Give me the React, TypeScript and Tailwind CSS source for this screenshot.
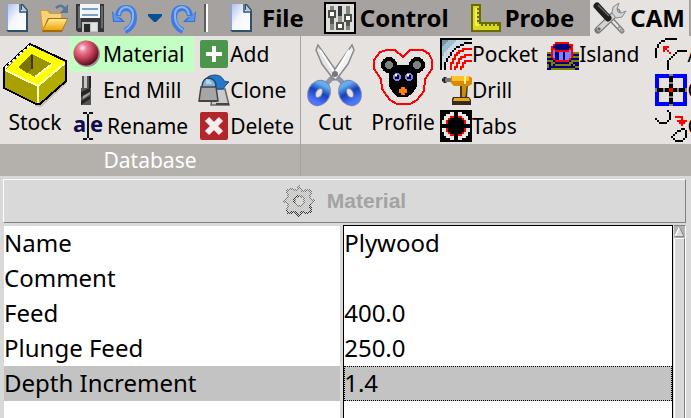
import type { ReactNode } from 'react';

const palette: Record<string, string> = {
  k: '#000000',
  r: '#ff0000',
  b: '#0000ff',
  n: '#000080',
  v: '#8080ff',
  o: '#808000',
  g: '#808080',
  w: '#e9e6e3',
  y: '#d8d820',
  Y: '#f0f060',
  d: '#6b6b00',
  1: '#6f94ab',
  2: '#9dbccc',
  3: '#c9dce6',
};

function PixelIcon({ rows, className = 'size-8' }: { rows: string[]; className?: string }) {
  return (
    <svg viewBox="0 0 16 16" className={`${className} shrink-0`} shapeRendering="crispEdges" aria-hidden="true">
      {rows.flatMap((row, y) =>
        row.split('').map((c, x) =>
          palette[c] ? <rect key={`${x}-${y}`} x={x} y={y} width="1" height="1" fill={palette[c]} /> : null,
        ),
      )}
    </svg>
  );
}

function Icon({ children, box = '0 0 32 32', className = 'size-8' }: { children: ReactNode; box?: string; className?: string }) {
  return (
    <svg viewBox={box} className={`${className} shrink-0 overflow-visible`} aria-hidden="true">
      {children}
    </svg>
  );
}

const pocket = [
  'kkkkkkkkkkkkkkkk',
  'k1112222333333ww',
  'k11222233333kkkk',
  'k122223333kk....',
  'k2222333kk......',
  'k222333k...rrrrr',
  'k22333k..rrr....',
  'k2333k..rr......',
  'k2333k.rr...rrrr',
  'k333k..r..rrr...',
  'k33k..rr.rr.....',
  'k33k..r..r..rrrr',
  'k3k..rr.rr.rr...',
  'k3k..r..r..r....',
  'k3k..r.rr.rr....',
  'kwk..r.r..r.....',
];

const tabs = [
  'kkkkkkkkkkkkkkkk',
  'kkkkkwwkkwwkkkkk',
  'kkkwwwwkkwwwwkkk',
  'kkwwwrrkkrrwwwkk',
  'kkwwrkkkkkkrwwkk',
  'kwwrkkkkkkkkrwwk',
  'kwwrkkkkkkkkrwwk',
  'kkkkkkkkkkkkkkkk',
  'kkkkkkkkkkkkkkkk',
  'kwwrkkkkkkkkrwwk',
  'kwwrkkkkkkkkrwwk',
  'kkwwrkkkkkkrwwkk',
  'kkwwwrrkkrrwwwkk',
  'kkkwwwwkkwwwwkkk',
  'kkkkkwwkkwwkkkkk',
  'kkkkkkkkkkkkkkkk',
];

const island = [
  '................',
  '................',
  '....rrrrrrr.....',
  '...rnnnnnnnrr...',
  '..rnnnnnnnnnr...',
  '..rrnnnnnnnrr...',
  '..rvrrrrrrrvr...',
  'oorvnnvvnvvvrooo',
  'nnrvnnvvnvvvrnnn',
  'oorvnnvvnvvvrooo',
  'nnnrnnvvnvvrnnnn',
  'ooonrrrrrrrnoooo',
  'nnoonnnnnnnoonnn',
  'ononoooooooononn',
  'onnnnnnnnnnnnnoo',
  'nnoooooooooooonn',
];

const arcFit = [
  '.....kkkkkk.....',
  '...kk...........',
  '..k.............',
  '.k..............',
  '.k..rrr.........',
  'k...rr..........',
  'k...r.r....kkkkk',
  'k......r..k.....',
  'k........k......',
  'k.......k.......',
  '.......k........',
  '......k.........',
  '......k.........',
  '......k.........',
  '......k.........',
  '......k.........',
];

const center = [
  'bbbbbbbggbbbbbbb',
  'bbbbbbbkkbbbbbbb',
  'bb.....kk.....bb',
  'bb.....kk.....bb',
  'bb.....gg.....bb',
  'bb.....kk.....bb',
  'bb.....kk.....bb',
  'gkkkgkkrrkkgkkkg',
  'gkkkgkkrrkkgkkkg',
  'bb.....kk.....bb',
  'bb.....kk.....bb',
  'bb.....gg.....bb',
  'bb.....kk.....bb',
  'bb.....kk.....bb',
  'bbbbbbbkkbbbbbbb',
  'bbbbbbbggbbbbbbb',
];

const closePath = [
  '......k.........',
  '.......k........',
  '.......k........',
  '.......k..rrrr..',
  'k......k.....r..',
  '.k....k....rrrrr',
  '..kkkk......rrr.',
  '.............r..',
  '................',
  '.............kk.',
  '...........kk..k',
  '..........k....k',
  '.........k.....k',
  '........k......k',
  '.........k....k.',
  '..........kkkk..',
];

const ruler = [
  '................',
  '.ddddd..........',
  '.dyyyd..........',
  '.dyYdd..........',
  '.dyYyd..........',
  '.dyYdd..........',
  '.dyYyd..........',
  '.dyYdd..........',
  '.dyYyd..........',
  '.dyYdd..........',
  '.dyYyddddddddddd',
  '.dyYYydydydydydd',
  '.dyyyyyyyyyyyyyd',
  '.dyyyyyyyyyyyyyd',
  '.ddddddddddddddd',
  '................',
];

const DocIcon = () => (
  <Icon>
    <defs>
      <linearGradient id="paper" x1="0" x2="1" y1="0" y2="1">
        <stop offset="0" stopColor="#a9bbe6" />
        <stop offset=".5" stopColor="#f4f7ff" />
        <stop offset="1" stopColor="#ffffff" />
      </linearGradient>
    </defs>
    <path d="M4 2h17l5 6v22H6l-2-2z" fill="#2f4f70" />
    <path d="M4 2h15v6h5v20H4z" fill="url(#paper)" />
    <path d="M4 2h2v26H4z" fill="#8fa5cf" />
    <path d="M20 3l5 6h-5z" fill="#b9cbe0" />
    <path d="M18 2v8h7" fill="none" stroke="#35516e" strokeWidth="1.5" />
  </Icon>
);

const OpenIcon = () => (
  <Icon>
    <defs>
      <linearGradient id="folder" x1="0" x2="0" y1="0" y2="1">
        <stop offset="0" stopColor="#ffe98a" />
        <stop offset="1" stopColor="#eda414" />
      </linearGradient>
    </defs>
    <path d="M2 8h8l3 3h11v4L9 28H4z" fill="#d39b2c" />
    <path d="M3 9h6l3 3h11v4H10L5 26z" fill="#f6d37a" />
    <path d="M10 16h20l-6 14H4z" fill="#a8690d" />
    <path d="M11 17h18l-5 11H5z" fill="url(#folder)" />
    <path d="M18 6q5-5 9 1" fill="none" stroke="#5b7796" strokeWidth="2.5" />
    <path d="M30 2v9h-8z" fill="#5b7796" />
  </Icon>
);

const SaveIcon = () => (
  <Icon>
    <path d="M2 2h28v28H4l-2-2z" fill="#35363a" />
    <path d="M4 4h3v22H4zM27 4h2v22h-2z" fill="#66686d" />
    <path d="M6 2h20v14H6z" fill="#f2f6fa" />
    <path d="M8 6h16v2H8zM8 12h16v2H8z" fill="#7f9dbd" />
    <path d="M8 20h16v10H8z" fill="#bfc1c2" />
    <path d="M10 22h6v8h-6z" fill="#26282a" />
    <path d="M17 21h6v8h-6z" fill="#e2e2e0" />
  </Icon>
);

const UndoIcon = ({ flipped = false }: { flipped?: boolean }) => (
  <Icon>
    <g transform={flipped ? 'matrix(-1 0 0 1 30 0)' : undefined}>
      <path d="M8 14Q9 6 16 6Q24 6 24 16Q24 25 15 29" fill="none" stroke="#3f7be0" strokeWidth="6" />
      <path d="M9 13Q10 5 17 5Q24 6 23 16Q22 24 15 28" fill="none" stroke="#8ab4f4" strokeWidth="2" />
      <path d="M2 9l1 11h12l-4-4-5-2z" fill="#2f70da" />
      <path d="M3 11l9 8H4z" fill="#5d95ec" />
    </g>
  </Icon>
);

const SlidersIcon = () => (
  <Icon box="0 0 16 16">
    <g shapeRendering="crispEdges">
      <path d="M0 0h16v16H0z" fill="#000" />
      <path d="M1 1h14v14H1z" fill="#dfe0dc" />
      <path d="M3 2h2v12H3zM11 2h2v12h-2z" fill="#858580" />
      <path d="M7 2h2v5H7z" fill="#343a3a" />
      <path d="M7 7h2v7H7z" fill="#92928a" />
      <path d="M3 8h2v3H3zM11 10h2v2h-2z" fill="#555852" />
      <path d="M2 4h4v4H2zM6 10h4v4H6zM10 6h4v4h-4z" fill="#4b4e49" />
      <path d="M3 5h2v2H3zM7 11h2v2H7zM11 7h2v2h-2z" fill="#fff" />
    </g>
  </Icon>
);

const ToolsIcon = () => (
  <Icon>
    <path d="M14 14l14 15" stroke="#777" strokeWidth="5" strokeLinecap="round" />
    <path d="M15 15l13 14" stroke="#e8e8e8" strokeWidth="2.5" />
    <path d="M4 28L23 10" stroke="#777" strokeWidth="7" strokeLinecap="round" />
    <path d="M5 27L23 10" stroke="#d2d2d2" strokeWidth="4.5" strokeLinecap="round" />
    <path d="M25 1l-6 4-1 6 4 5 6-1 4-6-5 2-3-1-1-3z" fill="#d6d6d6" stroke="#8a8a8a" />
    <circle cx="5" cy="27" r="1.7" fill="#6c6c6c" />
    <path d="M3 4l11 12" stroke="#1f1f1f" strokeWidth="7" strokeLinecap="round" />
    <path d="M4 3l11 11" stroke="#666" strokeWidth="1.5" />
    <path d="M24 25l5 5" stroke="#999" strokeWidth="4" strokeDasharray="2 1" />
  </Icon>
);

const StockIcon = () => (
  <Icon box="0 0 64 64" className="size-16">
    <path d="M64 22v18L38 64l-6-1z" fill="#bdbab8" />
    <g shapeRendering="crispEdges">
      <path d="M27 1L63 18V38L37 61H33L1 45V25z" fill="#a8a000" stroke="#000" strokeWidth="2" />
      <path d="M36 43L62 21V37L36 60z" fill="#b3ac00" />
      <path d="M27 2L62 19 35 43 2 27z" fill="#ffff00" />
      <path d="M29 11L49 21 32 34 15 24z" fill="#9a9300" />
      <path d="M29 11V26L24 30 15 24z" fill="#7a7400" />
      <path d="M29 12v14" stroke="#3f3b00" strokeWidth="2" />
      <path d="M2 27L35 43 62 20M35 43V60M49 21L32 34" fill="none" stroke="#ffffb8" strokeWidth="2" />
      <path d="M2 25L27 2" stroke="#fff" strokeWidth="2" strokeDasharray="3 2" />
    </g>
  </Icon>
);

const BallIcon = () => (
  <Icon box="0 0 28 32" className="h-8 w-7">
    <defs>
      <radialGradient id="ball" cx=".36" cy=".3" r=".7">
        <stop offset="0" stopColor="#fff" />
        <stop offset=".22" stopColor="#ea8499" />
        <stop offset=".6" stopColor="#c8405c" />
        <stop offset="1" stopColor="#581222" />
      </radialGradient>
    </defs>
    <circle cx="14" cy="16" r="13" fill="#9b8f8f" />
    <circle cx="13" cy="15" r="12.5" fill="url(#ball)" />
  </Icon>
);

const MillIcon = () => (
  <Icon box="0 0 28 32" className="h-8 w-7">
    <path d="M9 2h9v12H9z" fill="#555" />
    <path d="M11 2h3v12h-3z" fill="#c6c6c6" />
    <path d="M16 2h2v12h-2z" fill="#222" />
    <path d="M8 14h10v17H8z" fill="#555" />
    <path d="M8 18l9-4v4l-9 5zM8 27l9-5v3l-9 6z" fill="#252525" />
    <path d="M10 22l7-4v2l-7 5z" fill="#a0a0a0" />
  </Icon>
);

const RenameIcon = () => (
  <Icon>
    <text x="0" y="22" fontFamily="Noto Sans, sans-serif" fontWeight="700" fontSize="22" fill="#0d0d50">a</text>
    <text x="17" y="22" fontFamily="Noto Sans, sans-serif" fontWeight="700" fontSize="22" fill="#0d0d50">e</text>
    <path d="M10 3h4M16 3h4M10 29h4M16 29h4" stroke="#111" strokeWidth="2" />
    <path d="M14 4h2v24h-2z" fill="#111" />
  </Icon>
);

const AddIcon = () => (
  <Icon>
    <rect x="2" y="2" width="28" height="28" rx="2" fill="#4c954c" />
    <path d="M16 8v16M8 16h16" stroke="#fff" strokeWidth="4" />
  </Icon>
);

const CloneIcon = () => (
  <Icon>
    <path d="M15 15h12l4 16H13z" fill="#c9c9c9" stroke="#666" strokeWidth="1.5" />
    <path d="M7 6Q10 1 17 1Q24 1 26 7L31 8 28 11 25 15H16z" fill="#2477cf" stroke="#234d79" />
    <path d="M4 12Q5 4 11 4Q17 5 18 11L17 14H4z" fill="#7db4dc" stroke="#294556" strokeWidth="1.5" />
    <path d="M8 5Q12 5 14 10H8z" fill="#b2d5e9" />
    <path d="M3 13h15l2 14H1z" fill="#a6a6a6" stroke="#444" strokeWidth="1.5" />
    <path d="M18 30h13M1 27h18" stroke="#444" strokeWidth="2" />
  </Icon>
);

const DeleteIcon = () => (
  <Icon>
    <rect x="2" y="2" width="28" height="28" rx="2" fill="#b3262b" />
    <path d="M9 9l14 14M23 9L9 23" stroke="#f6eded" strokeWidth="6" />
  </Icon>
);

const CutIcon = () => (
  <Icon box="0 0 64 64" className="size-16">
    <defs>
      <linearGradient id="grip" x1="0" x2="0" y1="0" y2="1">
        <stop offset="0" stopColor="#62aef0" />
        <stop offset=".45" stopColor="#1640bb" />
        <stop offset="1" stopColor="#4c74ff" />
      </linearGradient>
    </defs>
    <path d="M34 30L22 42M30 30L42 42" stroke="#8f93a8" strokeWidth="5" />
    <path d="M15 2l-2 5 6 14 12 16 4-3-3-8z" fill="#e4e4e4" stroke="#8a8a8a" strokeWidth="1.5" />
    <path d="M49 2l2 5-6 14-12 16-4-3 3-8z" fill="#f1f1f1" stroke="#8a8a8a" strokeWidth="1.5" />
    <path d="M17 7l14 22M46 7L33 29" stroke="#fff" strokeWidth="2" />
    <ellipse cx="16" cy="50" rx="7" ry="9" transform="rotate(28 16 50)" fill="none" stroke="#7c87ab" strokeWidth="9" />
    <ellipse cx="47" cy="50" rx="7" ry="9" transform="rotate(-28 47 50)" fill="none" stroke="#7c87ab" strokeWidth="9" />
    <ellipse cx="16" cy="50" rx="7" ry="9" transform="rotate(28 16 50)" fill="none" stroke="url(#grip)" strokeWidth="7" />
    <ellipse cx="47" cy="50" rx="7" ry="9" transform="rotate(-28 47 50)" fill="none" stroke="url(#grip)" strokeWidth="7" />
    <circle cx="32" cy="31" r="3" fill="#777" />
  </Icon>
);

const ProfileIcon = () => (
  <Icon box="0 0 64 64" className="size-16">
    <g shapeRendering="crispEdges">
      <path
        d="M3 17L9 9 16 7H24L32 14 39 7H52L58 11 61 17V26L54 36 53 48 46 57 39 61H26L19 57 11 46 10 36 3 26z"
        fill="none"
        stroke="#f00"
        strokeWidth="2"
      />
      <circle cx="18" cy="22" r="8" />
      <circle cx="46" cy="22" r="8" />
      <path d="M22 22H42L46 30V43L42 50 36 54H27L22 50 18 43V30z" />
      <circle cx="18" cy="22" r="4" fill="#808080" />
      <circle cx="46" cy="22" r="4" fill="#808080" />
      <circle cx="26" cy="34" r="4" fill="#8080ff" />
      <circle cx="38" cy="34" r="4" fill="#8080ff" />
      <path d="M26 32h2v4h-4v-2h2zM38 32h2v4h-4v-2h2z" fill="#000" />
      <path d="M24 31h2v2h-2zM36 31h2v2h-2z" fill="#fff" />
      <path d="M30 44h4v2h2v4h-2v2h-4v-2h-2v-4h2z" fill="#ff8000" />
    </g>
  </Icon>
);

const DrillIcon = () => (
  <Icon>
    <path d="M2 6h10M5 3v6" stroke="#222" strokeWidth="3" />
    <path d="M5 6h7" stroke="#777" strokeWidth="4" />
    <path d="M20 10h8l-1 15h-7z" fill="#4a3b18" />
    <path d="M22 10h5l-2 15h-3z" fill="#c98d10" />
    <path d="M11 2h18l3 2v6l-3 2H14l-3-3z" fill="#d98b00" />
    <path d="M12 2h17v5H12z" fill="#ffc229" />
    <path d="M24 2h2v8h-2z" fill="#fff0a0" />
    <path d="M13 23h16l2 3v5H12v-6z" fill="#352b18" />
    <path d="M14 24h15l1 3H13z" fill="#e9a51c" />
  </Icon>
);

const GearIcon = () => (
  <Icon>
    <defs>
      <pattern id="stipple" width="2" height="2" patternUnits="userSpaceOnUse">
        <path d="M0 0h1v1H0zM1 1h1v1H1z" fill="#c2c2be" />
      </pattern>
      <pattern id="stippleMid" width="2" height="2" patternUnits="userSpaceOnUse">
        <path d="M0 0h1v1H0zM1 1h1v1H1z" fill="#7c7c78" />
      </pattern>
      <pattern id="stippleDark" width="2" height="2" patternUnits="userSpaceOnUse">
        <path d="M0 0h1v1H0zM1 1h1v1H1z" fill="#383838" />
      </pattern>
    </defs>
    <g shapeRendering="crispEdges" fillRule="evenodd">
      <path
        d="M16 1l3 5 7-1 2 2-1 6 4 3-4 4 1 6-3 2-6-1-3 4-4-4-7 1-1-3 1-6-4-3 4-4-1-6 3-2 7 1zM16 11a5 5 0 1 0 1 0z"
        fill="url(#stipple)"
        stroke="url(#stippleMid)"
        strokeWidth="2"
      />
      <path
        d="M27 19l1 7-3 2-6-1-3 4-4-4-7 1-1-3M16 11a5 5 0 0 0-5 7"
        fill="none"
        stroke="url(#stippleDark)"
        strokeWidth="2"
      />
    </g>
  </Icon>
);

function ToolButton({ icon, label, active = false }: { icon: ReactNode; label: string; active?: boolean }) {
  return (
    <button
      type="button"
      className={`flex h-9 items-center whitespace-nowrap pl-[3px] pr-1.5 text-left ${active ? 'bg-[#c3ffc3]' : ''}`}
    >
      {icon}
      <span>{label}</span>
    </button>
  );
}

function LargeButton({ icon, label }: { icon: ReactNode; label: string }) {
  return (
    <button type="button" className="flex shrink-0 flex-col items-center px-0.5 pt-[7px]">
      {icon}
      <span className="leading-[30px]">{label}</span>
    </button>
  );
}

function Tab({ icon, label, selected = false }: { icon: ReactNode; label: string; selected?: boolean }) {
  return (
    <button
      type="button"
      role="tab"
      aria-selected={selected}
      className={`flex h-9 shrink-0 items-center gap-1 px-1 ${selected ? 'bg-[#e6e2df]' : ''}`}
    >
      {icon}
      <span>{label}</span>
    </button>
  );
}

const properties = [
  { name: 'Name', value: 'Plywood' },
  { name: 'Comment', value: '' },
  { name: 'Feed', value: '400.0' },
  { name: 'Plunge Feed', value: '250.0' },
  { name: 'Depth Increment', value: '1.4', selected: true },
];

export default function App() {
  return (
    <div className="flex h-screen flex-col overflow-hidden bg-[#d9d9d9] font-['Noto_Sans',sans-serif] text-black">
      <header className="flex h-9 shrink-0 items-center overflow-hidden bg-[#a6a29f]">
        <div className="flex shrink-0 items-center gap-1 pl-0.5">
          <button type="button" aria-label="New"><DocIcon /></button>
          <button type="button" aria-label="Open"><OpenIcon /></button>
          <button type="button" aria-label="Save"><SaveIcon /></button>
          <button type="button" aria-label="Undo"><UndoIcon /></button>
          <button type="button" aria-label="Undo history" className="flex w-[18px] justify-center">
            <Icon box="0 0 14 8" className="h-2 w-3.5"><path d="M0 0h14v2L8 8H6L0 2z" fill="#08508e" /></Icon>
          </button>
          <button type="button" aria-label="Redo"><UndoIcon flipped /></button>
          <span className="h-7 w-1 border-l-2 border-r-2 border-l-[#5f5c5a] border-r-white" />
        </div>
        <nav role="tablist" className="ml-3.5 flex gap-3 text-2xl font-bold">
          <Tab icon={<DocIcon />} label="File" />
          <Tab icon={<SlidersIcon />} label="Control" />
          <Tab icon={<PixelIcon rows={ruler} />} label="Probe" />
          <Tab icon={<ToolsIcon />} label="CAM" selected />
        </nav>
      </header>

      <div className="flex shrink-0 overflow-hidden bg-[#e6e2df] text-[21px] leading-9">
        <section className="shrink-0 border-r border-[#a6a29f]">
          <div className="flex h-[108px] gap-px pl-px">
            <LargeButton icon={<StockIcon />} label="Stock" />
            <div className="grid content-start [&>button]:gap-0.5">
              <ToolButton icon={<BallIcon />} label="Material" active />
              <ToolButton icon={<MillIcon />} label="End Mill" />
              <ToolButton icon={<RenameIcon />} label="Rename" />
            </div>
            <div className="grid content-start">
              <ToolButton icon={<AddIcon />} label="Add" />
              <ToolButton icon={<CloneIcon />} label="Clone" />
              <ToolButton icon={<DeleteIcon />} label="Delete" />
            </div>
          </div>
          <h2 className="h-8 bg-[#b4b0ac] text-center leading-8 text-white">Database</h2>
        </section>
        <section className="min-w-0 flex-1">
          <div className="flex h-[108px] overflow-hidden">
            <LargeButton icon={<CutIcon />} label="Cut" />
            <LargeButton icon={<ProfileIcon />} label="Profile" />
            <div className="grid shrink-0 content-start">
              <ToolButton icon={<PixelIcon rows={pocket} />} label="Pocket" />
              <ToolButton icon={<DrillIcon />} label="Drill" />
              <ToolButton icon={<PixelIcon rows={tabs} />} label="Tabs" />
            </div>
            <div className="grid shrink-0 content-start pr-[7px]">
              <ToolButton icon={<PixelIcon rows={island} />} label="Island" />
            </div>
            <div className="grid shrink-0 content-start">
              <ToolButton icon={<PixelIcon rows={arcFit} />} label="Arc Fit" />
              <ToolButton icon={<PixelIcon rows={center} />} label="Center" />
              <ToolButton icon={<PixelIcon rows={closePath} />} label="Close" />
            </div>
          </div>
          <div className="h-8 bg-[#b4b0ac]" />
        </section>
      </div>

      <main className="flex min-h-0 flex-1 flex-col pl-[3px] pr-[5px] pt-[3px]">
        <button
          type="button"
          disabled
          className="flex h-11 w-full shrink-0 items-center justify-center gap-3 border border-b-[#808080] border-l-white border-r-[#808080] border-t-white font-['Liberation_Sans',sans-serif] text-[21px] font-bold text-[#a3a3a3]"
        >
          <GearIcon />
          Material
        </button>
        <div className="mt-0.5 flex min-h-0 flex-1 pl-px">
          <div className="min-w-0 flex-1">
            <table className="h-full w-full table-fixed border-separate border-spacing-0 text-2xl">
              <colgroup>
                <col className="w-[50.7%]" />
                <col />
              </colgroup>
              <tbody>
                {properties.map(({ name, value, selected }, index) => (
                  <tr key={name} className={index === 0 ? 'h-9' : 'h-[35px]'}>
                    <th
                      scope="row"
                      className={`border-r-[3px] border-[#d9d9d9] p-0 text-left font-normal leading-[33px] ${index === 0 ? 'border-t' : ''} ${selected ? 'bg-[#c3c3c3]' : 'bg-white'}`}
                    >
                      <div className="h-[35px]">{name}</div>
                    </th>
                    <td className={`border-x border-black p-0 leading-[33px] ${index === 0 ? 'border-t' : ''} ${selected ? 'bg-[#c3c3c3]' : 'bg-white'}`}>
                      <div className={`h-[35px] ${selected ? 'outline-1 -outline-offset-1 outline-dotted outline-black' : ''}`}>{value}</div>
                    </td>
                  </tr>
                ))}
                <tr>
                  <td className="border-r-[3px] border-[#d9d9d9] bg-white p-0" />
                  <td className="border-x border-black bg-white p-0" />
                </tr>
              </tbody>
            </table>
          </div>
          <div className="ml-px flex w-3 shrink-0 flex-col border-r border-t border-[#808080] border-r-white bg-[#b3b3b3]">
            <button type="button" aria-label="Scroll up" className="h-3 w-full">
              <Icon box="0 0 12 12" className="h-3 w-full">
                <path d="M6 1L11 11H1z" fill="#d9d9d9" />
                <path d="M6 1L1 11" stroke="#fff" strokeWidth="1.5" />
                <path d="M6 1l5 10H1" fill="none" stroke="#808080" />
              </Icon>
            </button>
            <div className="flex-1 border-l border-r border-t border-l-white border-r-[#808080] border-t-white bg-[#d9d9d9]" />
          </div>
        </div>
      </main>
    </div>
  );
}
